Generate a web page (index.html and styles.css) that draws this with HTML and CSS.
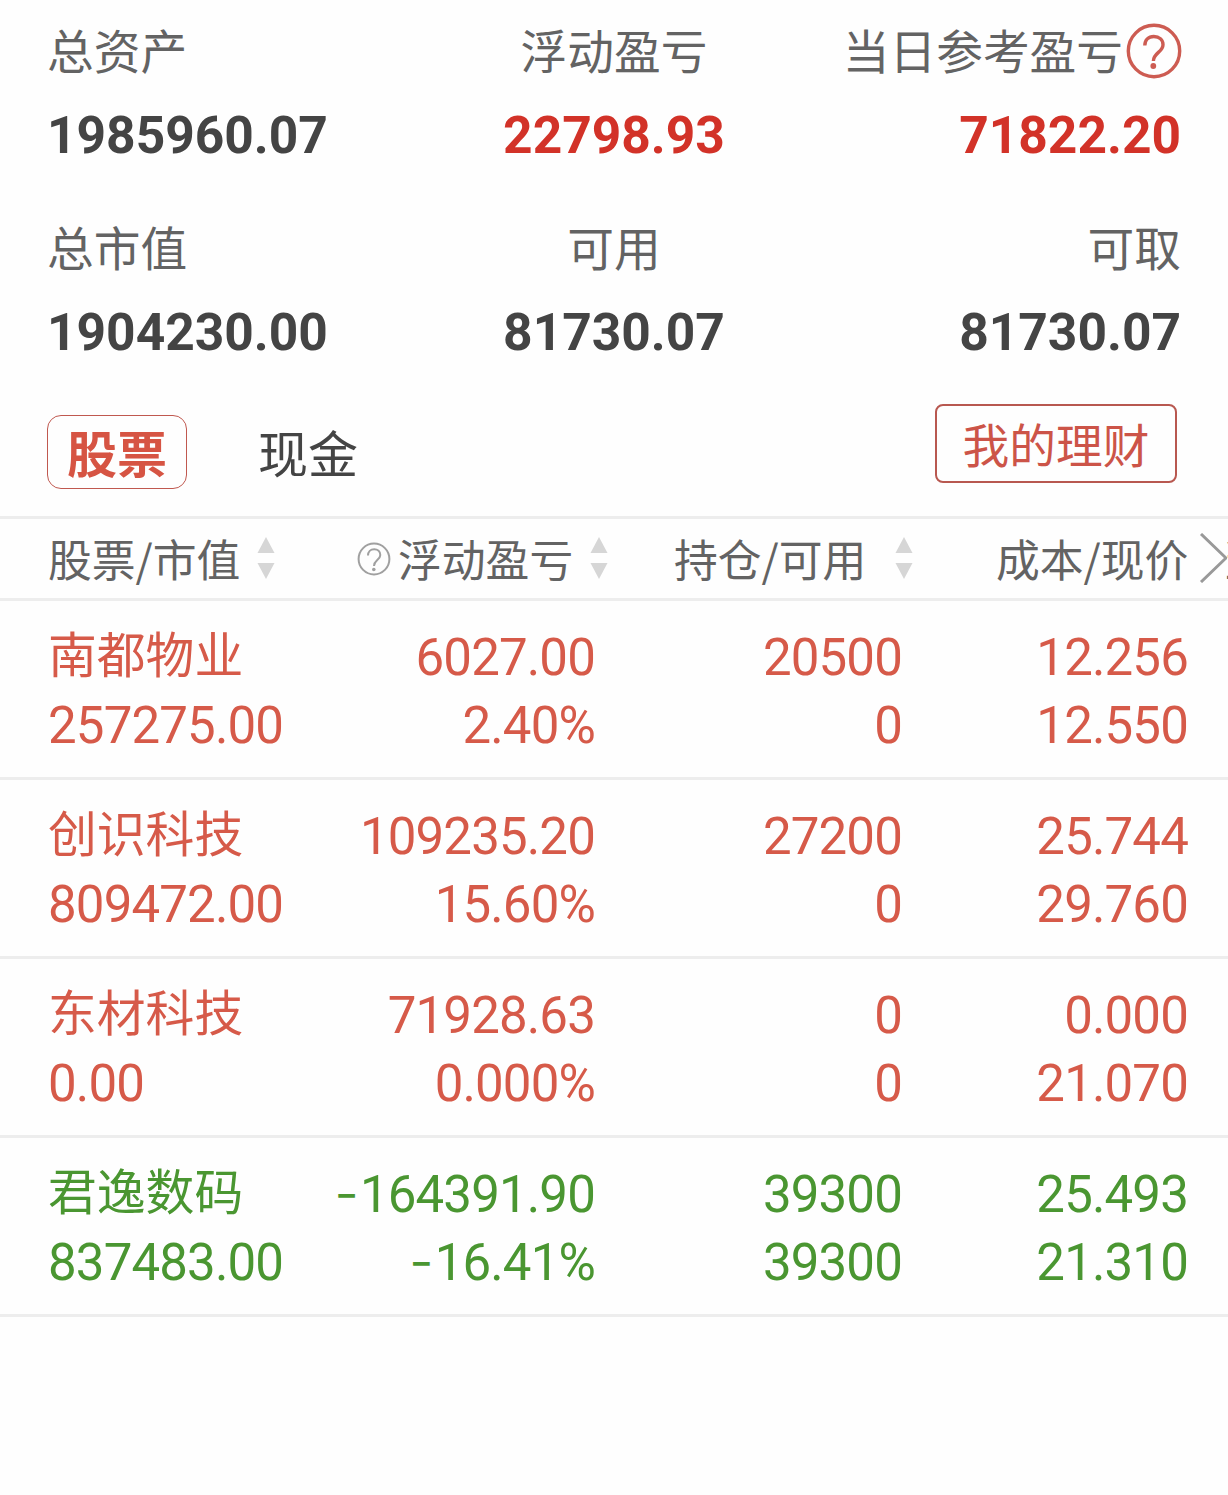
FILE: index.html
```html
<!doctype html>
<html lang="zh-CN">
<head>
    <meta charset="UTF-8">
    <meta name="viewport" content="width=device-width, initial-scale=1.0">
    <title>我的持仓</title>
    <link rel="stylesheet" href="styles.css">
</head>

<body>
    <!-- Account summary -->
    <div class="summary">
        <div class="item">
            <div class="label">总资产</div>
            <div class="value">1985960.07</div>
        </div>
        <div class="item center">
            <div class="label">浮动盈亏</div>
            <div class="value red">22798.93</div>
        </div>
        <div class="item right">
            <div class="label">当日参考盈亏<svg class="help-big" viewBox="0 0 56 56"><circle cx="28" cy="28" r="25.7"/><path d="M18.8 22.500c0-5.600 3.600-9 9-9s9.200 3.200 9.200 8.200c0 7.600-9.600 7.800-9.600 16.300"/><circle class="dot" cx="27.300" cy="43" r="2.900"/></svg></div>
            <div class="value red">71822.20</div>
        </div>
        <div class="item">
            <div class="label">总市值</div>
            <div class="value">1904230.00</div>
        </div>
        <div class="item center">
            <div class="label">可用</div>
            <div class="value">81730.07</div>
        </div>
        <div class="item right">
            <div class="label">可取</div>
            <div class="value">81730.07</div>
        </div>
    </div>

    <div class="tabs">
        <a class="tab active">股票</a>
        <a class="tab">现金</a>
        <a class="my-btn">我的理财</a>
    </div>

    <div class="table-head">
        <div class="th">股票/市值<svg class="sort" viewBox="0 0 18 42"><path d="M9 0L17.500 16H.5zM.5 26H17.500L9 42z"/></svg></div>
        <div class="th"><svg class="help-small" viewBox="0 0 34 34"><circle cx="17" cy="17" r="15.4"/><path d="M11 13.500c0-4 2.600-6.300 6.200-6.300 3.500 0 6.100 2.300 6.100 5.700 0 5-6.300 5.500-6.300 11"/><circle class="dot" cx="16.800" cy="27.500" r="1.800"/></svg>浮动盈亏<svg class="sort" viewBox="0 0 18 42"><path d="M9 0L17.500 16H.5zM.5 26H17.500L9 42z"/></svg></div>
        <div class="th wide">持仓/可用<svg class="sort" viewBox="0 0 18 42"><path d="M9 0L17.500 16H.5zM.5 26H17.500L9 42z"/></svg></div>
        <div class="th">成本/现价<svg class="more" viewBox="0 0 28 50"><path d="M2 1L27 25L2 49"/></svg></div>
        <!-- next column, mostly off screen -->
        <div class="th">当日盈亏</div>
    </div>

    <!-- Holdings -->
    <div class="stock up">
        <div class="cell"><div class="name">南都物业</div><div>257275.00</div></div>
        <div class="cell"><div>6027.00</div><div>2.40%</div></div>
        <div class="cell"><div>20500</div><div>0</div></div>
        <div class="cell"><div>12.256</div><div>12.550</div></div>
    </div>
    <div class="stock up">
        <div class="cell"><div class="name">创识科技</div><div>809472.00</div></div>
        <div class="cell"><div>109235.20</div><div>15.60%</div></div>
        <div class="cell"><div>27200</div><div>0</div></div>
        <div class="cell"><div>25.744</div><div>29.760</div></div>
    </div>
    <div class="stock up">
        <div class="cell"><div class="name">东材科技</div><div>0.00</div></div>
        <div class="cell"><div>71928.63</div><div>0.000%</div></div>
        <div class="cell"><div>0</div><div>0</div></div>
        <div class="cell"><div>0.000</div><div>21.070</div></div>
    </div>
    <div class="stock down">
        <div class="cell"><div class="name">君逸数码</div><div>837483.00</div></div>
        <div class="cell"><div><span class="minus">−</span>164391.90</div><div><span class="minus">−</span>16.41%</div></div>
        <div class="cell"><div>39300</div><div>39300</div></div>
        <div class="cell"><div>25.493</div><div>21.310</div></div>
    </div>
</body>
</html>
```

FILE: styles.css
```css
* {
    box-sizing: border-box;
}
body {
    margin: 0;
    background: #fefefe;
    color: #444;
    font-family: "Noto Sans CJK SC", sans-serif;
    overflow-x: hidden;
}
svg {
    fill: none;
    flex-shrink: 0;
}
.summary {
    display: grid;
    grid-template-columns: 1fr 1fr 1fr;
    row-gap: 46px;
    padding: 18px 47px 0;
}
.label {
    display: flex;
    height: 64px;
    line-height: 62px;
    font-size: 46.7px;
    color: #636363;
    white-space: nowrap;
}
.value {
    margin-top: 21px;
    height: 66px;
    line-height: 66px;
    font-family: Roboto, sans-serif;
    font-size: 51.5px;
    font-weight: bold;
}
.center .label {
    justify-content: center;
}
.center {
    text-align: center;
}
.right .label {
    justify-content: flex-end;
}
.right {
    text-align: right;
}
.red {
    color: #d23228;
}
.help-big {
    width: 56px;
    height: 56px;
    margin: 5px -1px 0 3px;
    stroke: #cd5c52;
    stroke-width: 3.4;
}
.help-big .dot {
    fill: #cd5c52;
    stroke: none;
}
.tabs {
    display: flex;
    align-items: flex-start;
    height: 150px;
    padding: 49px 51px 0 47px;
}
.tab {
    width: 140px;
    height: 74px;
    margin-right: 51px;
    line-height: 73px;
    font-size: 50px;
    text-align: center;
}
.tab.active {
    border: 1px solid #c0584f;
    border-radius: 14px;
    font-weight: bold;
    color: #d65443;
    line-height: 71px;
}
.my-btn {
    width: 242px;
    height: 79px;
    margin: -11px 0 0 auto;
    border: 2px solid #b85850;
    border-radius: 8px;
    line-height: 73px;
    font-size: 46.7px;
    text-align: center;
    color: #cc5448;
}
.table-head {
    display: grid;
    grid-template-columns: 309px 317px 322px 226px 175px;
    width: 100%;
    height: 85px;
    padding-left: 48px;
    border-top: 3px solid #ededed;
    border-bottom: 3px solid #ededed;
    font-size: 43.8px;
    line-height: 78px;
    color: #636363;
    overflow: hidden;
}
.th {
    display: flex;
    white-space: nowrap;
}
.sort {
    width: 18px;
    height: 42px;
    margin: 18px 0 0 17px;
    fill: #d6d6d6;
}
.wide .sort {
    margin-left: 29px;
}
.help-small {
    width: 34px;
    height: 34px;
    margin: 23px 7px 0 0;
    stroke: #a0a0a0;
    stroke-width: 2;
}
.help-small .dot {
    fill: #a0a0a0;
    stroke: none;
}
.more {
    width: 28px;
    height: 50px;
    margin: 14px 0 0 11px;
    stroke: #999;
    stroke-width: 3;
}
.stock {
    display: grid;
    grid-template-columns: 274px 273px 307px 286px;
    height: 179px;
    padding: 18px 0 0 48px;
    border-bottom: 3px solid #ededed;
    font-family: Roboto, sans-serif;
    font-size: 51px;
    letter-spacing: -0.85px;
    line-height: 68px;
}
.cell {
    padding-top: 5px;
    text-align: right;
}
.cell:first-child {
    text-align: left;
}
.name {
    font-family: "Noto Sans CJK SC", sans-serif;
    font-size: 48.8px;
    letter-spacing: 0;
    line-height: 56px;
    margin-bottom: 12px;
}
.minus {
    margin-right: 3px;
    font-size: 40px;
    font-weight: 500;
    line-height: 1;
    vertical-align: 2px;
}
.up {
    color: #d65a49;
}
.down {
    color: #4a9631;
}
```
